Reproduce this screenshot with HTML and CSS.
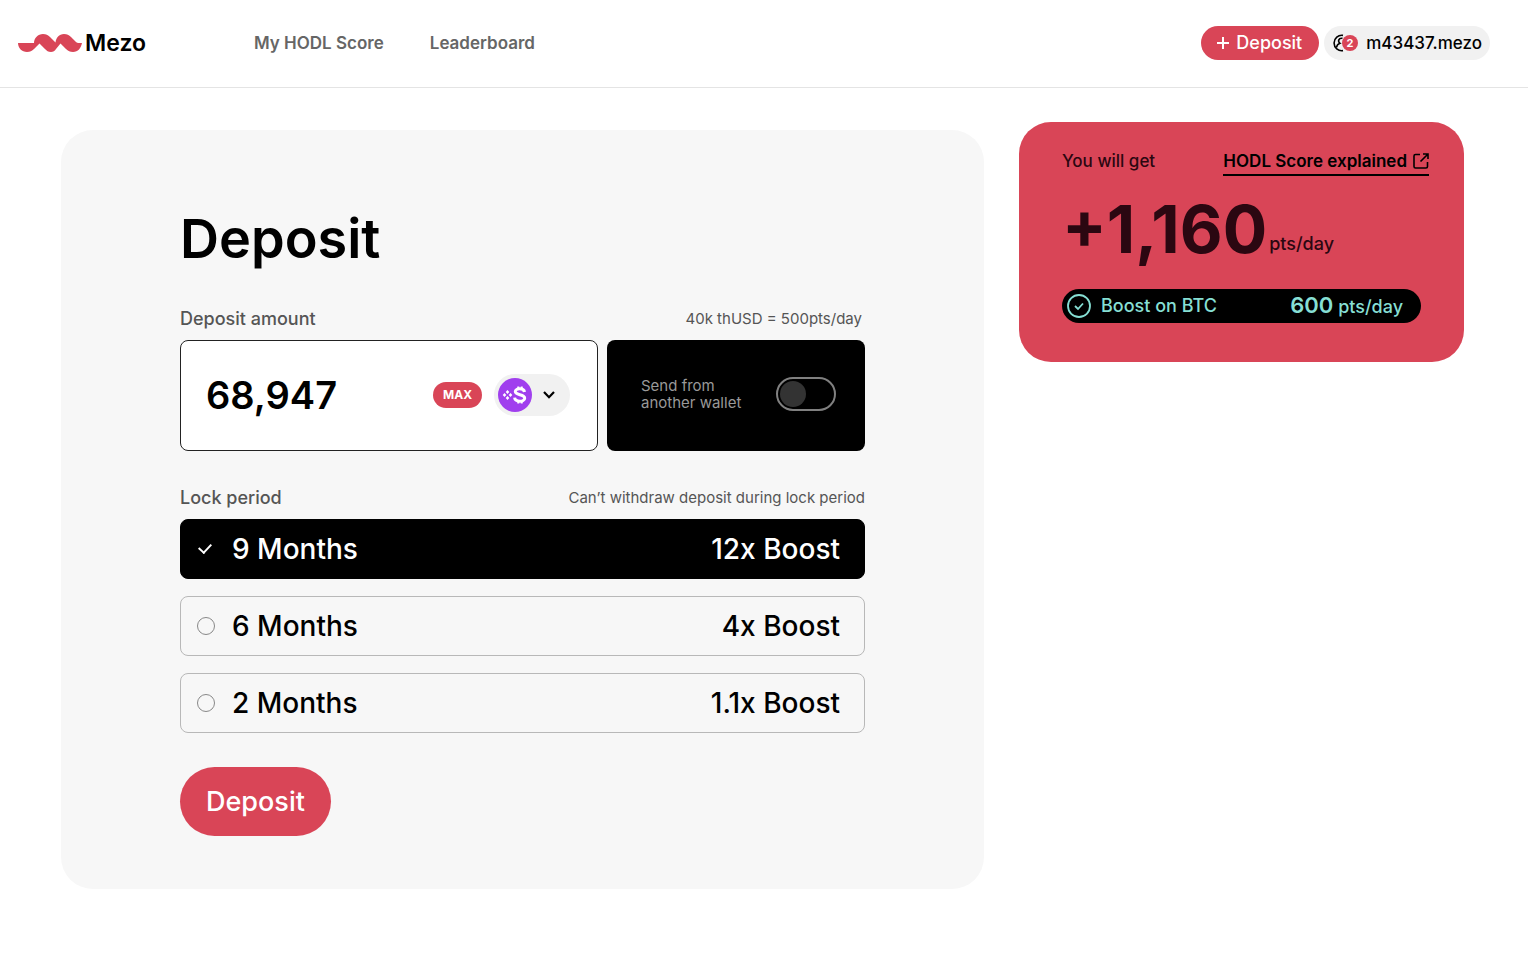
FILE: index.html
```html
<!DOCTYPE html>
<html lang="en">
<head>
<meta charset="utf-8">
<meta name="viewport" content="width=device-width, initial-scale=1">
<title>Mezo – Deposit</title>
<link rel="stylesheet" href="styles.css">
</head>
<body>
<header class="topbar">
  <a class="brand" href="#" aria-label="Mezo home">
    <svg class="brand-mark" viewBox="0 0 64 18" aria-hidden="true"><path fill="#d94557" d="M0 9H16C16 4 20 0 25 0C28 0 30 1 32 3L37.500 8.500C38 4 41 0 46 0C49 0 51 1 53 3L58 8Q59 9 60.500 9H64C63 14 60 18 55 18C52 18 50 17 48 15L42.500 9.500L38 15C37 17 35 18 33 18C30 18 29 17 27 15L21.500 9.500L16 15C14 17 12 18 9 18C4 18 0 14 0 9Z"/></svg>
    <span class="brand-name">Mezo</span>
  </a>
  <nav class="nav">
    <a href="#">My HODL Score</a>
    <a href="#">Leaderboard</a>
  </nav>
  <div class="actions">
    <button class="pill pill-red" type="button">
      <svg class="plus" viewBox="0 0 12 12" aria-hidden="true"><path d="M6 0V12M0 6H12" stroke="currentColor" stroke-width="2"/></svg>
      Deposit
    </button>
    <button class="pill pill-grey" type="button">
      <svg class="avatar" viewBox="0 0 26 18" aria-hidden="true"><path d="M11 1.400A7.700 7.700 0 1 0 11 16.600" fill="none" stroke="#000" stroke-width="1.600"/><path d="M10.500 4.300C6.500 3.700 5.500 7.500 8 9.300C6 10 4.800 11.500 4.500 13.500" fill="none" stroke="#000" stroke-width="1.600"/><circle cx="18" cy="9" r="8" fill="#d94557"/><text x="18" y="13" text-anchor="middle">2</text></svg>
      m43437.mezo
    </button>
  </div>
</header>
<main class="page">
  <form class="panel">
    <h1>Deposit</h1>
    <div class="field-head">
      <label for="amount">Deposit amount</label>
      <span class="hint hint-rate">40k thUSD = 500pts/day</span>
    </div>
    <div class="amount-row">
      <div class="amount-box">
        <input class="amount" id="amount" type="text" value="68,947">
        <button class="max" type="button">MAX</button>
        <button class="token" type="button" aria-label="Choose token">
          <svg class="token-icon" viewBox="0 0 34 34" aria-hidden="true"><circle cx="17" cy="17" r="17" fill="#a03fee"/><g fill="none" stroke="#fff"><path d="M26.500 14C26 10 17.300 9.700 17.300 13.600C17.300 17.800 26.700 15.700 26.700 20.300C26.700 24.300 17 24.300 16.600 19.700" stroke-width="3"/><path d="M20.300 8.500V11M23.700 8.500V11M20.300 23V25.500M23.700 23V25.500" stroke-width="2"/></g><path fill="#fff" d="M9.500 12L11.300 14L9.500 16L7.700 14ZM9.500 18L11.300 20L9.500 22L7.700 20ZM6.500 15L8.300 17L6.500 19L4.700 17ZM12.500 15L14.300 17L12.500 19L10.700 17Z"/></svg>
          <svg class="chevron" viewBox="0 0 12 8" aria-hidden="true"><path d="M1 1L6 6.200L11 1" fill="none" stroke="#000" stroke-width="2.200"/></svg>
        </button>
      </div>
      <label class="send-box">
        <span>Send from<br>another wallet</span>
        <input class="switch" type="checkbox" role="switch">
      </label>
    </div>
    <fieldset class="periods">
      <div class="field-head">
        <span id="lock">Lock period</span>
        <span class="hint">Can’t withdraw deposit during lock period</span>
      </div>
      <div class="options" role="radiogroup" aria-labelledby="lock">
        <label class="option"><input type="radio" name="period" checked><span>9 Months</span><span class="boost">12x Boost</span></label>
        <label class="option"><input type="radio" name="period"><span>6 Months</span><span class="boost">4x Boost</span></label>
        <label class="option"><input type="radio" name="period"><span>2 Months</span><span class="boost">1.1x Boost</span></label>
      </div>
    </fieldset>
    <button class="submit" type="button">Deposit</button>
  </form>
  <aside class="score">
    <div class="score-head">
      <span>You will get</span>
      <a href="#">HODL Score explained
        <svg class="external" viewBox="0 0 16 16" aria-hidden="true"><path d="M7 1.500H2.500Q1 1.500 1 3V13.500Q1 15 2.500 15H13Q14.500 15 14.500 13.500V9M10 1H15V6M15 1L7.500 8.500" fill="none" stroke="#000" stroke-width="1.600"/></svg>
      </a>
    </div>
    <p class="total"><strong>+1,160</strong><span class="unit">pts/day</span></p>
    <div class="boost-pill">
      <svg class="tick" viewBox="0 0 24 24" aria-hidden="true"><circle cx="12" cy="12" r="11" fill="none" stroke="currentColor" stroke-width="1.800"/><path d="M8 12L11 15L16 9.500" fill="none" stroke="currentColor" stroke-width="1.800"/></svg>
      <span>Boost on BTC</span>
      <span class="boost-value"><b>600</b> pts/day</span>
    </div>
  </aside>
</main>
</body>
</html>
```
FILE: styles.css
```css
* { box-sizing: border-box; }

body {
  margin: 0;
  background: #fff;
  color: #000;
  font: 500 17px/20px Inter, sans-serif;
}

button, input { font: inherit; color: inherit; }
button { border: 0; cursor: pointer; }
a { color: inherit; text-decoration: none; }
svg { display: block; flex: none; }

.topbar {
  display: flex;
  align-items: center;
  min-height: 88px;
  padding: 0 38px 1px 18px;
  border-bottom: 1px solid #e4e4e4;
}
.brand { display: flex; align-items: center; gap: 3px; width: 236px; }
.brand-mark { width: 64px; height: 18px; }
.brand-name { font-size: 23px; line-height: 28px; font-weight: 600; }
.nav { display: flex; gap: 46px; color: #666; font-weight: 600; }
.actions { display: flex; gap: 5px; margin-left: auto; }
.pill {
  display: flex;
  align-items: center;
  height: 34px;
  border-radius: 17px;
}
.pill-red { gap: 7px; padding: 0 17px 0 16px; background: #d94557; color: #fff; font-size: 18px; }
.pill-grey { gap: 8px; padding: 0 8px; background: #f1f1f1; }
.plus { width: 12px; height: 12px; }
.avatar { width: 26px; height: 18px; }
.avatar text { fill: #fff; font: 700 11px Inter, sans-serif; }

.page {
  display: grid;
  grid-template-columns: minmax(0, 923fr) minmax(0, 445fr);
  align-items: start;
  gap: 35px;
  padding: 34px 64px 90px 61px;
}

.panel {
  margin-top: 8px;
  padding: 77px 119px 53px;
  border-radius: 32px;
  background: #f7f7f7;
}
h1 { margin: 0 0 38px; font-size: 54px; line-height: 64px; font-weight: 600; }
.field-head {
  display: flex;
  justify-content: space-between;
  align-items: center;
  margin-bottom: 11px;
  color: #555;
  font-size: 18px;
}
.hint { font-size: 15px; font-weight: 400; }
.hint-rate { margin-right: 3px; }

.amount-row {
  display: grid;
  grid-template-columns: minmax(0, 418fr) minmax(0, 258fr);
  gap: 9px;
  margin-bottom: 37px;
}
.amount-box {
  display: flex;
  align-items: center;
  height: 111px;
  padding: 0 27px 2px 25px;
  border: 1px solid #222;
  border-radius: 8px;
  background: #fff;
}
.amount {
  flex: 1;
  min-width: 0;
  padding: 0;
  border: 0;
  outline: 0;
  background: none;
  font-size: 38px;
  line-height: 48px;
  font-weight: 600;
}
.max {
  height: 26px;
  margin-right: 12px;
  padding: 0 10px;
  border-radius: 13px;
  background: #d94557;
  color: #fff;
  font-size: 12px;
  font-weight: 700;
}
.token {
  display: flex;
  align-items: center;
  gap: 11px;
  height: 42px;
  padding: 0 15px 0 4px;
  border-radius: 21px;
  background: #f1f1f1;
}
.token-icon { width: 34px; height: 34px; }
.chevron { width: 12px; height: 8px; }
.send-box {
  display: flex;
  align-items: center;
  justify-content: space-between;
  padding: 0 29px 3px 34px;
  border-radius: 8px;
  background: #000;
  color: #999;
  font-size: 15px;
  line-height: 17px;
  font-weight: 400;
}
.switch {
  appearance: none;
  flex: none;
  display: flex;
  align-items: center;
  width: 60px;
  height: 34px;
  margin: 0;
  padding: 0 2px;
  border: 2px solid #808080;
  border-radius: 17px;
}
.switch::before {
  content: "";
  width: 26px;
  height: 26px;
  border-radius: 50%;
  background: #333;
}
.switch:checked { justify-content: flex-end; }

.periods { margin: 0 0 34px; padding: 0; border: 0; }
.options { display: grid; gap: 17px; }
.option {
  display: flex;
  align-items: center;
  gap: 17px;
  height: 60px;
  padding: 0 24px 0 16px;
  border: 1px solid #b8b8b8;
  border-radius: 8px;
  font-size: 28px;
  line-height: 32px;
}
.option:has(:checked) { border-color: #000; background: #000; color: #fff; }
.option input {
  appearance: none;
  flex: none;
  display: grid;
  place-items: center;
  width: 18px;
  height: 18px;
  margin: 0;
  border: 1px solid #888;
  border-radius: 50%;
}
.option input:checked { border-color: transparent; }
.option input:checked::before {
  content: "";
  width: 10px;
  height: 6px;
  margin: 0 2px 4px 0;
  border: solid #fff;
  border-width: 0 0 2px 2px;
  transform: rotate(-47deg);
}
.boost { margin-left: auto; }

.submit {
  height: 69px;
  padding: 0 26px;
  border-radius: 35px;
  background: #d94557;
  color: #fff;
  font-size: 27px;
  line-height: 32px;
}

.score {
  padding: 29px 35px 39px 43px;
  border-radius: 32px;
  background: #d94557;
  color: #2b0711;
}
.score-head { display: flex; justify-content: space-between; align-items: flex-start; }
.score-head a {
  display: flex;
  align-items: center;
  gap: 6px;
  padding-bottom: 3px;
  border-bottom: 2px solid #000;
  color: #000;
  font-weight: 600;
}
.external { width: 16px; height: 16px; }
.total { display: flex; align-items: flex-end; gap: 2px; margin: 14px 0 21px; }
.total strong { font-size: 66px; line-height: 78px; font-weight: 700; }
.unit { padding-bottom: 14px; font-size: 18px; }
.boost-pill {
  display: flex;
  align-items: center;
  gap: 10px;
  height: 34px;
  margin-right: 8px;
  padding: 0 18px 0 5px;
  border-radius: 17px;
  background: #000;
  color: #86dfd4;
  font-size: 18px;
}
.tick { width: 24px; height: 24px; }
.boost-value { margin-left: auto; }
.boost-value b { font-size: 22px; font-weight: 600; }
```
